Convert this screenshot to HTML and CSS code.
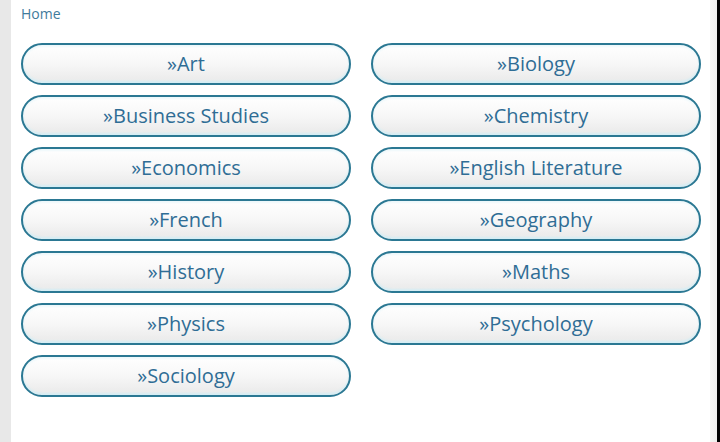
FILE: index.html
```html
<!DOCTYPE html>
<html>
<head>
<meta charset="utf-8">
<link rel="stylesheet" href="styles.css">
</head>
<body>
<div class="frame">
  <div class="side-left"></div>
  <main class="content">
    <nav class="crumb"><a href="#">Home</a></nav>
    <div class="grid">
      <a class="btn" href="#">»Art</a>
      <a class="btn" href="#">»Biology</a>
      <a class="btn" href="#">»Business Studies</a>
      <a class="btn" href="#">»Chemistry</a>
      <a class="btn" href="#">»Economics</a>
      <a class="btn" href="#">»English Literature</a>
      <a class="btn" href="#">»French</a>
      <a class="btn" href="#">»Geography</a>
      <a class="btn" href="#">»History</a>
      <a class="btn" href="#">»Maths</a>
      <a class="btn" href="#">»Physics</a>
      <a class="btn" href="#">»Psychology</a>
      <a class="btn" href="#">»Sociology</a>
    </div>
  </main>
  <div class="side-right"></div>
  <div class="edge"></div>
</div>
</body>
</html>
```
FILE: styles.css
```css
html, body {
  margin: 0;
  padding: 0;
  height: 100%;
  background: #fff;
  font-family: "Open Sans", "Noto Sans", sans-serif;
}
.frame {
  display: flex;
  height: 442px;
  overflow: hidden;
}
.side-left {
  width: 11px;
  flex: none;
  background: #e8e8e8;
}
.content {
  flex: 1;
  background: #fff;
  padding: 4px 0 0 10px;
}
.side-right {
  width: 7px;
  flex: none;
  background: linear-gradient(to right, #f6f6f4, #efefed);
}
.edge {
  width: 3px;
  flex: none;
  background: #000;
}
.crumb {
  font-size: 14px;
  line-height: 20px;
  height: 20px;
}
.crumb a {
  color: #3f7b9c;
  text-decoration: none;
}
.grid {
  margin-top: 19px;
  display: grid;
  grid-template-columns: 330px 330px;
  column-gap: 20px;
  row-gap: 10px;
}
.btn {
  box-sizing: border-box;
  height: 42px;
  border: 2px solid #2b7893;
  border-radius: 21px;
  background: linear-gradient(to bottom, #ffffff 0%, #f7f7f7 50%, #e9e9e9 100%);
  box-shadow: inset 0 -2px 2px #d5eef5, inset 0 2px 2px #eef8fb;
  color: #2f6d95;
  font-size: 20px;
  line-height: 38px;
  text-align: center;
  text-decoration: none;
  white-space: nowrap;
}
```
